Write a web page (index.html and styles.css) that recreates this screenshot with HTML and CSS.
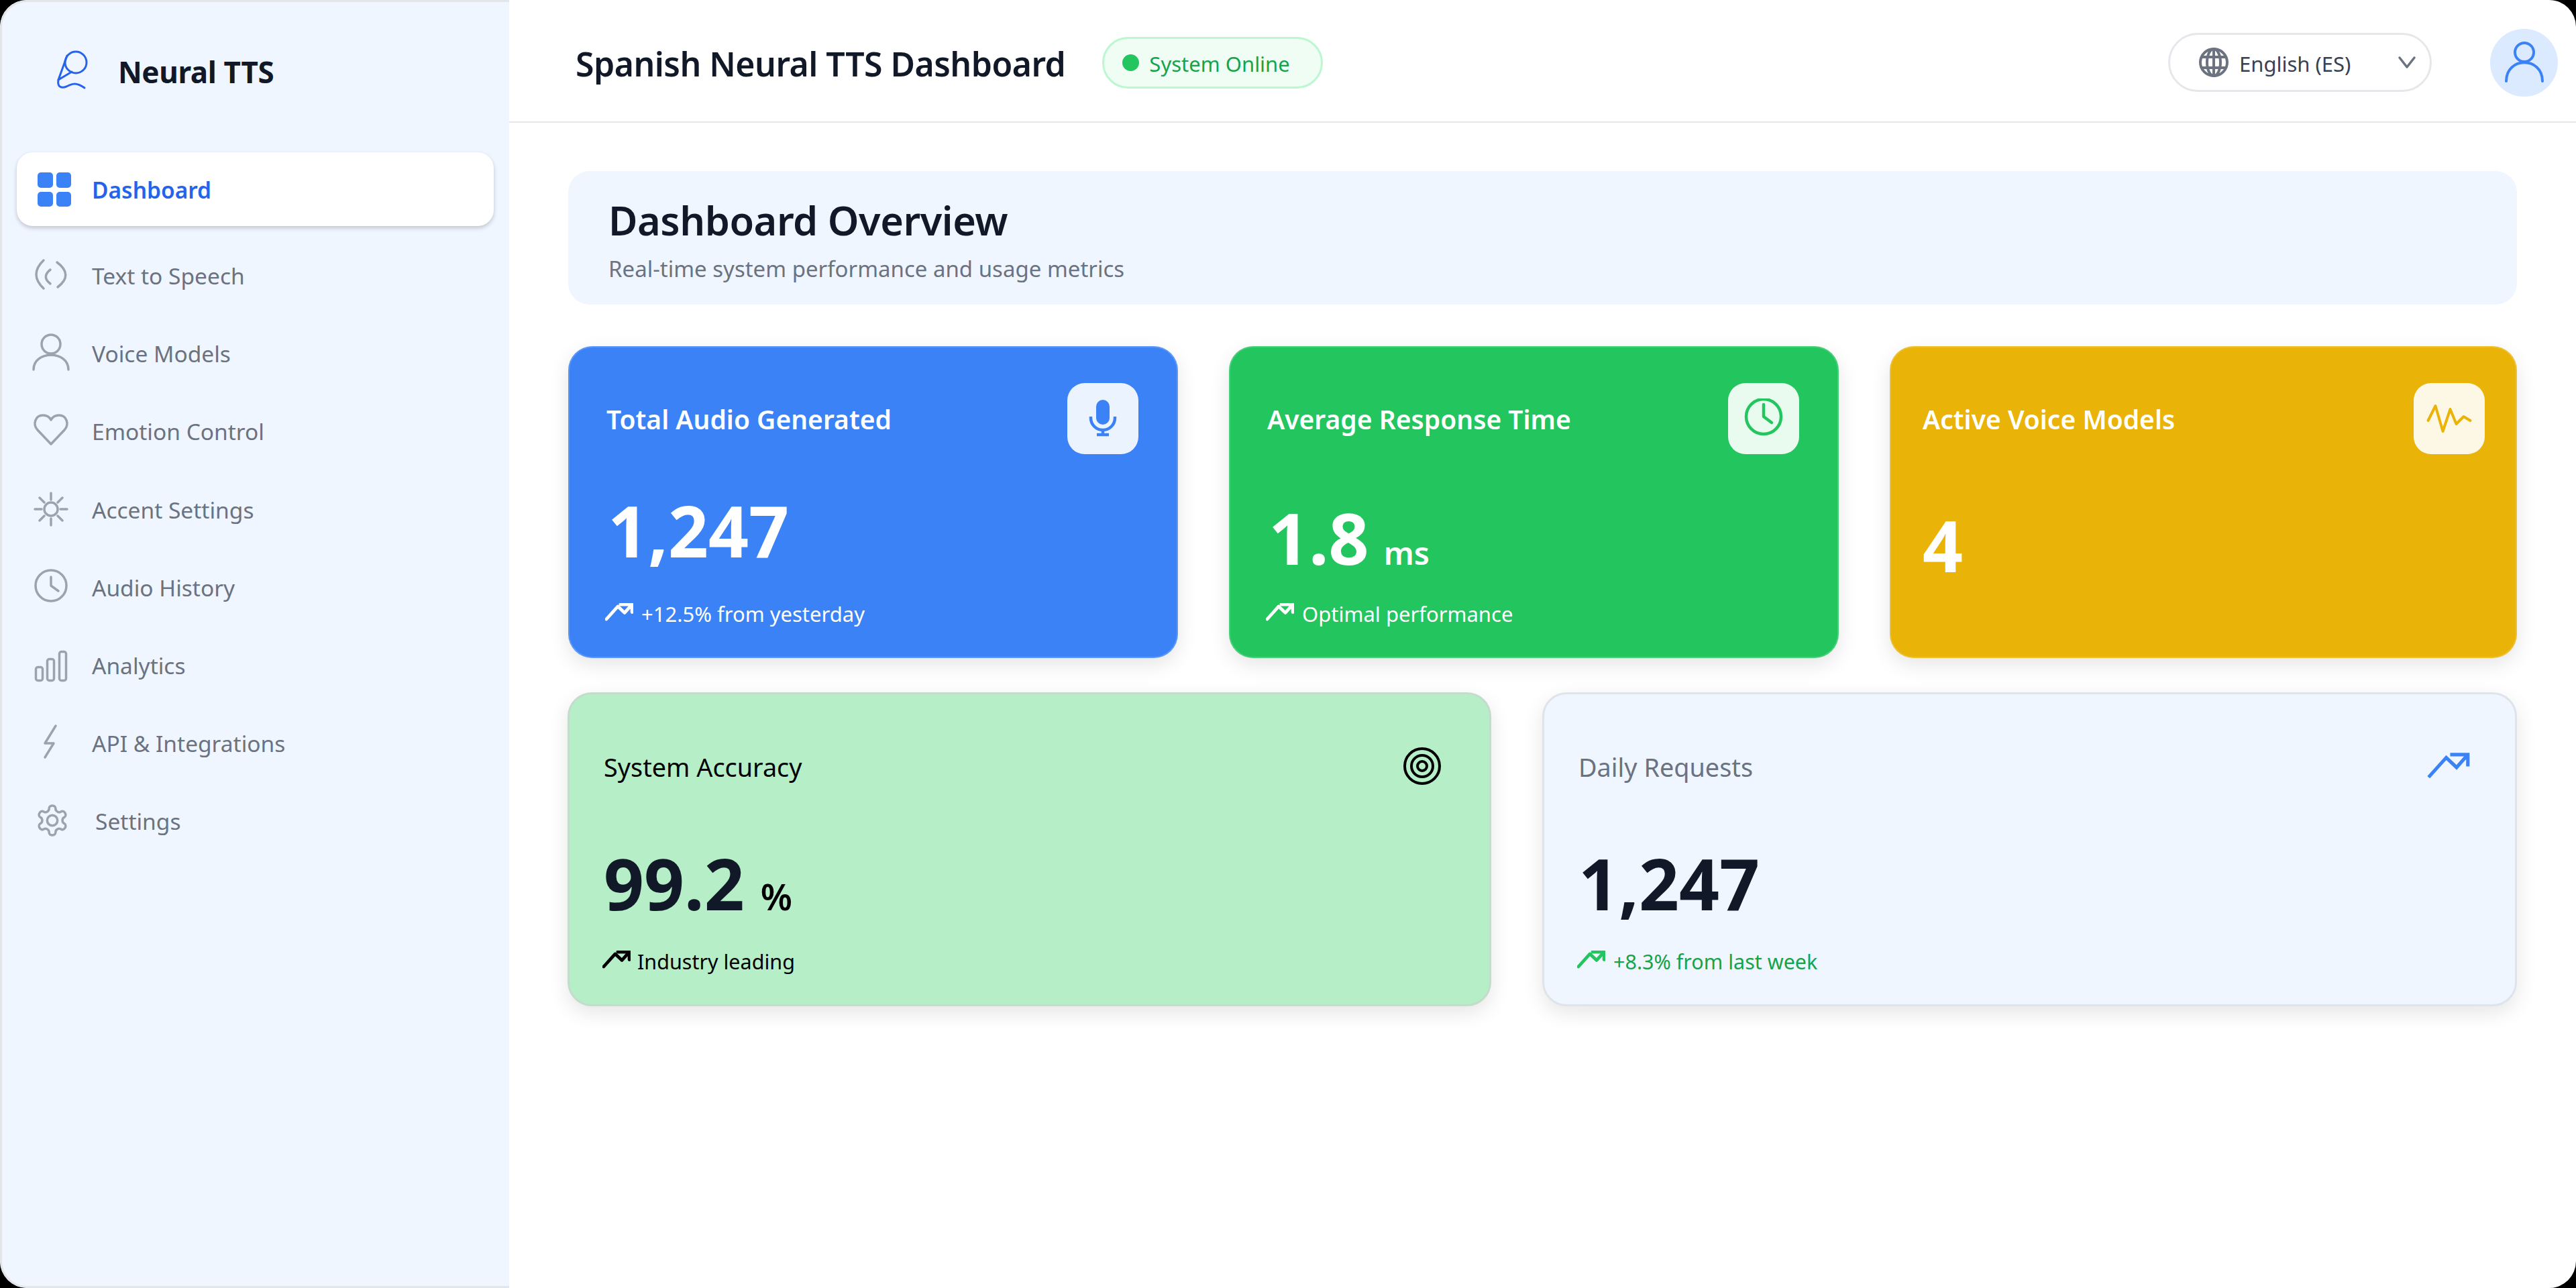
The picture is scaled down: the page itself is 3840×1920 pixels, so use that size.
FILE: index.html
```html
<!DOCTYPE html>
<html lang="en">
<head>
    <meta charset="UTF-8">
    <meta name="viewport" content="width=device-width, initial-scale=1.0">
    <title>Spanish Neural TTS Dashboard</title>
    <link rel="stylesheet" href="styles.css">
</head>
<body>
    <div class="app">
        <aside class="sidebar">
            <div class="logo">
                <svg class="logo-icon" viewBox="0 0 52 60" fill="none" stroke="#2563eb" stroke-width="3" stroke-linecap="round" stroke-linejoin="round">
                    <circle cx="33" cy="18" r="16"/>
                    <path d="M20 8 7 44 27 32"/>
                    <path d="M7 44C5 55 12 57 19 54C27 50 33 47 46 56"/>
                </svg>
                <span class="logo-text">Neural TTS</span>
            </div>
            <nav class="nav">
                <a class="nav-item active" href="#">
                    <svg class="nav-icon" viewBox="0 0 60 60" fill="#3b82f6">
                        <rect x="8" y="3" width="23" height="23" rx="5"/>
                        <rect x="36" y="3" width="22" height="23" rx="5"/>
                        <rect x="8" y="32" width="23" height="22" rx="5"/>
                        <rect x="36" y="32" width="22" height="22" rx="5"/>
                    </svg>
                    Dashboard
                </a>
                <a class="nav-item" href="#">
                    <svg class="nav-icon" viewBox="0 0 60 60">
                        <path d="M17 8Q-5 29 17 50"/>
                        <path d="M27 22Q13.6 32.5 27 43"/>
                        <path d="M37 11Q62 29.5 38 48"/>
                    </svg>
                    Text to Speech
                </a>
                <a class="nav-item" href="#">
                    <svg class="nav-icon" viewBox="0 0 60 60">
                        <circle cx="28" cy="17" r="14"/>
                        <path d="M2 55C2 26 54 26 54 55"/>
                    </svg>
                    Voice Models
                </a>
                <a class="nav-item" href="#">
                    <svg class="nav-icon" viewBox="0 0 60 60">
                        <path d="M28 50 8 29C0 20 5 7 16 7C22 7 26 10 28 14C30 10 34 7 40 7C51 7 56 20 48 29Z"/>
                    </svg>
                    Emotion Control
                </a>
                <a class="nav-item" href="#">
                    <svg class="nav-icon" viewBox="0 0 60 60">
                        <circle cx="28" cy="30" r="10"/>
                        <path d="M28 6V16M28 44V54M4 30H14M42 30H52M11 13 18 20M38 40 45 47M11 47 18 40M38 20 45 13"/>
                    </svg>
                    Accent Settings
                </a>
                <a class="nav-item" href="#">
                    <svg class="nav-icon" viewBox="0 0 60 60">
                        <circle cx="28" cy="28" r="23"/>
                        <path d="M28 15V28L39 36"/>
                    </svg>
                    Audio History
                </a>
                <a class="nav-item" href="#">
                    <svg class="nav-icon" viewBox="0 0 60 60">
                        <rect x="5.5" y="33.5" width="10" height="20" rx="3"/>
                        <rect x="22.5" y="21.5" width="10" height="32" rx="3"/>
                        <rect x="40.5" y="10.5" width="10" height="43" rx="3"/>
                    </svg>
                    Analytics
                </a>
                <a class="nav-item" href="#">
                    <svg class="nav-icon" viewBox="0 0 60 60">
                        <path d="M35 5 19 31H32L19 52"/>
                    </svg>
                    API &amp; Integrations
                </a>
                <a class="nav-item nav-settings" href="#">
                    <svg class="nav-icon" viewBox="0 0 60 60">
                        <g transform="translate(3.6 3.6) scale(2.2)" stroke-width="1.6">
                            <path d="M12.22 2h-.44a2 2 0 0 0-2 2v.18a2 2 0 0 1-1 1.73l-.43.25a2 2 0 0 1-2 0l-.15-.08a2 2 0 0 0-2.73.73l-.22.38a2 2 0 0 0 .73 2.73l.15.1a2 2 0 0 1 1 1.72v.51a2 2 0 0 1-1 1.74l-.15.09a2 2 0 0 0-.73 2.73l.22.38a2 2 0 0 0 2.73.73l.15-.08a2 2 0 0 1 2 0l.43.25a2 2 0 0 1 1 1.73V20a2 2 0 0 0 2 2h.44a2 2 0 0 0 2-2v-.18a2 2 0 0 1 1-1.73l.43-.25a2 2 0 0 1 2 0l.15.08a2 2 0 0 0 2.73-.73l.22-.39a2 2 0 0 0-.73-2.73l-.15-.08a2 2 0 0 1-1-1.74v-.5a2 2 0 0 1 1-1.74l.15-.09a2 2 0 0 0 .73-2.73l-.22-.38a2 2 0 0 0-2.73-.73l-.15.08a2 2 0 0 1-2 0l-.43-.25a2 2 0 0 1-1-1.73V4a2 2 0 0 0-2-2z"/>
                            <circle cx="12" cy="12" r="3.5"/>
                        </g>
                    </svg>
                    Settings
                </a>
            </nav>
        </aside>

        <div class="main">
            <header class="topbar">
                <h1 class="page-title">Spanish Neural TTS Dashboard</h1>
                <div class="status-pill"><span class="status-dot"></span>System Online</div>
                <div class="lang-select">
                    <svg class="globe" viewBox="0 0 44 44" fill="none" stroke="#6b7280" stroke-width="4">
                        <circle cx="22" cy="22" r="20"/>
                        <ellipse cx="22" cy="22" rx="10" ry="20"/>
                        <path d="M4 14H40M4 30H40M22 2V42"/>
                    </svg>
                    <span class="lang-label">English (ES)</span>
                    <svg class="chevron" viewBox="0 0 28 20" fill="none" stroke="#6b7280" stroke-width="3.5" stroke-linecap="round" stroke-linejoin="round">
                        <path d="M3 3 14 17 25 3"/>
                    </svg>
                </div>
                <div class="avatar">
                    <svg viewBox="0 0 60 62" fill="none" stroke="#3b82f6" stroke-width="4" stroke-linecap="round">
                        <circle cx="30" cy="16" r="14"/>
                        <path d="M3 59C3 22 57 22 57 59"/>
                    </svg>
                </div>
            </header>

            <main class="content">
                <section class="overview">
                    <h2>Dashboard Overview</h2>
                    <p>Real-time system performance and usage metrics</p>
                </section>

                <section class="stats-top">
                    <div class="card card-blue">
                        <div class="card-head">
                            <span class="card-title">Total Audio Generated</span>
                            <span class="card-tile">
                                <svg viewBox="0 0 60 60" fill="none" stroke="#3b82f6" stroke-width="4.5">
                                    <rect x="20" y="2" width="20" height="37" rx="10" fill="#3b82f6" stroke="none"/>
                                    <path d="M12 27V29A18 18 0 0 0 48 29V27M30 47V54M21 54H39"/>
                                </svg>
                            </span>
                        </div>
                        <div class="card-value">1,247</div>
                        <div class="card-sub">
                            <svg class="trend" viewBox="0 0 44 28"><path d="M2 25 20 5 30.5 15 42 2M24 2H42V14"/></svg>
                            +12.5% from yesterday
                        </div>
                    </div>
                    <div class="card card-green">
                        <div class="card-head">
                            <span class="card-title">Average Response Time</span>
                            <span class="card-tile">
                                <svg viewBox="0 0 60 60" fill="none" stroke="#22c55e" stroke-width="4.5" stroke-linecap="round" stroke-linejoin="round">
                                    <circle cx="30" cy="27" r="26"/>
                                    <path d="M30 9V27L42 36"/>
                                </svg>
                            </span>
                        </div>
                        <div class="card-value">1.8<span class="unit">ms</span></div>
                        <div class="card-sub">
                            <svg class="trend" viewBox="0 0 44 28"><path d="M2 25 20 5 30.5 15 42 2M24 2H42V14"/></svg>
                            Optimal performance
                        </div>
                    </div>
                    <div class="card card-yellow">
                        <div class="card-head">
                            <span class="card-title">Active Voice Models</span>
                            <span class="card-tile">
                                <svg viewBox="0 0 70 70" fill="none" stroke="#eab308" stroke-width="4" stroke-linecap="round" stroke-linejoin="round">
                                    <path d="M3.5 38 14.5 16 25.500 54 36.500 21 45.500 43 56.500 32 66.500 38"/>
                                </svg>
                            </span>
                        </div>
                        <div class="card-value">4</div>
                    </div>
                </section>

                <section class="stats-bottom">
                    <div class="card-light card-mint">
                        <div class="card-head-light">
                            <span class="card-title-light">System Accuracy</span>
                            <svg class="target" viewBox="0 0 56 56" fill="none" stroke="#000" stroke-width="4">
                                <circle cx="28" cy="28" r="26"/>
                                <circle cx="28" cy="28" r="16"/>
                                <circle cx="28" cy="28" r="7"/>
                            </svg>
                        </div>
                        <div class="card-value">99.2<span class="unit">%</span></div>
                        <div class="card-sub">
                            <svg class="trend" viewBox="0 0 44 28"><path d="M2 25 20 5 30.5 15 42 2M24 2H42V14"/></svg>
                            Industry leading
                        </div>
                    </div>
                    <div class="card-light card-pale">
                        <div class="card-head-light">
                            <span class="card-title-light">Daily Requests</span>
                            <svg class="trend-big" viewBox="0 0 44 28"><path d="M2 25 20 5 30.5 15 42 2M24 2H42V14"/></svg>
                        </div>
                        <div class="card-value">1,247</div>
                        <div class="card-sub">
                            <svg class="trend" viewBox="0 0 44 28"><path d="M2 25 20 5 30.5 15 42 2M24 2H42V14"/></svg>
                            +8.3% from last week
                        </div>
                    </div>
                </section>
            </main>
        </div>
    </div>
</body>
</html>
```

FILE: styles.css
```css
* {
    box-sizing: border-box;
}

html, body {
    margin: 0;
    padding: 0;
    height: 100%;
    background: #000;
}

body {
    font-family: "Noto Sans", sans-serif;
    color: #111827;
}

.app {
    display: flex;
    width: 3840px;
    height: 1920px;
    background: #fff;
    border-radius: 40px;
    overflow: hidden;
}

/* sidebar */
.sidebar {
    flex: 0 0 759px;
    background: #eff6ff;
    border-left: 3px solid #e2e5ea;
    border-top: 3px solid #e2e5ea;
    border-bottom: 3px solid #e2e5ea;
    border-radius: 40px 0 0 40px;
}

.logo {
    display: flex;
    align-items: center;
    height: 224px;
    padding: 0 0 20px 77px;
}

.logo-icon {
    width: 52px;
    height: 60px;
}

.logo-text {
    margin: 3px 0 0 44px;
    font-size: 44px;
    font-weight: 700;
    letter-spacing: -0.4px;
}

.nav {
    display: flex;
    flex-direction: column;
    padding: 0 23px 0 22px;
}

.nav-item {
    display: flex;
    align-items: center;
    gap: 29px;
    height: 116.2px;
    padding: 2px 0 0 23px;
    font-size: 33.5px;
    color: #6b7280;
    text-decoration: none;
}

.nav-item.active {
    height: 110px;
    margin-bottom: 15px;
    background: #fff;
    border-radius: 24px;
    box-shadow: 0 3px 6px rgba(0, 0, 0, 0.2);
    color: #2563eb;
    font-weight: 600;
}

.nav-settings {
    gap: 34px;
}

.nav-icon {
    flex: none;
    width: 60px;
    height: 60px;
    margin-top: -2px;
    fill: none;
    stroke: #9ca3af;
    stroke-width: 3.5;
    stroke-linecap: round;
    stroke-linejoin: round;
    overflow: visible;
}

.active .nav-icon {
    margin-top: 2px;
    fill: #3b82f6;
    stroke: none;
}

/* top bar */
.main {
    flex: 1;
    min-width: 0;
}

.topbar {
    display: flex;
    align-items: center;
    height: 183px;
    padding: 5px 27px 0 99px;
    border-bottom: 2px solid #e5e7eb;
}

.page-title {
    margin: 4px 0 0;
    font-size: 50px;
    font-weight: 600;
    letter-spacing: -0.55px;
}

.status-pill {
    display: flex;
    align-items: center;
    width: 329px;
    height: 77px;
    margin-left: 55px;
    padding: 4px 0 0 27px;
    background: #f0fdf4;
    border: 3px solid #bbf7d0;
    border-radius: 39px;
    color: #16a34a;
    font-size: 31px;
}

.status-dot {
    width: 25px;
    height: 25px;
    margin: -4px 15px 0 0;
    border-radius: 50%;
    background: #22c55e;
}

.lang-select {
    display: flex;
    align-items: center;
    width: 393px;
    height: 88px;
    margin-left: auto;
    padding: 0 20px 0 43px;
    border: 3px solid #e5e7eb;
    border-radius: 44px;
}

.globe {
    width: 44px;
    height: 44px;
}

.lang-label {
    margin: 4px 0 0 16px;
    font-size: 31px;
    color: #374151;
}

.chevron {
    width: 28px;
    height: 20px;
    margin-left: auto;
}

.avatar {
    display: flex;
    align-items: center;
    justify-content: center;
    width: 101px;
    height: 101px;
    margin-left: 87px;
    border-radius: 50%;
    background: #dbeafe;
}

.avatar svg {
    width: 60px;
    height: 62px;
}

/* content */
.content {
    padding: 72px 88px 0;
}

.overview {
    height: 199px;
    padding: 37px 60px 0;
    background: #eff6ff;
    border-radius: 32px;
}

.overview h2 {
    margin: 0;
    font-size: 59.5px;
    font-weight: 600;
    line-height: 72px;
    letter-spacing: -0.5px;
}

.overview p {
    margin: 14px 0 0;
    font-size: 33px;
    line-height: 46px;
    color: #6b7280;
}

.stats-top {
    display: grid;
    grid-template-columns: 909px 909px 1fr;
    grid-template-rows: 465px;
    gap: 76px;
    margin-top: 62px;
}

.stats-bottom {
    display: grid;
    grid-template-columns: 1377px 1fr;
    grid-template-rows: 468px;
    gap: 76px;
    margin-top: 51px;
    margin-left: -1px;
}

.card {
    padding: 55px 59px 0 57px;
    border-radius: 36px;
    color: #fff;
    box-shadow: inset 0 0 0 2px rgba(255, 255, 255, 0.18), 0 10px 30px rgba(0, 0, 0, 0.1);
}

.card-blue {
    background: #3b82f6;
}

.card-green {
    background: #22c55e;
}

.card-yellow {
    padding: 55px 48px 0 49px;
    background: #eab308;
}

.card-head {
    display: flex;
    align-items: center;
    justify-content: space-between;
    height: 106px;
}

.card-title {
    font-size: 39px;
    font-weight: 600;
}

.card-tile {
    display: flex;
    align-items: center;
    justify-content: center;
    width: 106px;
    height: 106px;
    border-radius: 26px;
    background: rgba(255, 255, 255, 0.9);
}

.card-tile svg {
    width: 60px;
    height: 60px;
}

.card-yellow .card-tile svg {
    width: 70px;
    height: 70px;
}

.card-value {
    font-size: 105px;
    font-weight: 700;
    line-height: 1;
}

.card-blue .card-value,
.card-green .card-value {
    margin-left: 2px;
}

.unit {
    margin-left: 22px;
    font-size: 47px;
    font-weight: 600;
}

.card-mint .unit {
    margin-left: 24px;
    font-size: 54px;
    color: #000;
}

.card-sub {
    display: flex;
    align-items: center;
    gap: 12px;
    height: 45px;
    font-size: 31px;
}

.trend {
    flex: none;
    width: 42px;
    height: 27px;
    margin: -4px 0 0 -2px;
    fill: none;
    stroke: currentColor;
    stroke-width: 5;
    stroke-linecap: round;
    stroke-linejoin: round;
}

.card-blue .card-value {
    margin-top: 61px;
}

.card-blue .card-sub {
    margin-top: 49px;
}

.card-green .card-value {
    margin-top: 72px;
}

.card-green .card-sub {
    margin-top: 38px;
}

.card-yellow .card-value {
    margin-top: 83px;
}

/* lower cards */
.card-light {
    padding: 73px 66px 0 51px;
    border: 3px solid #dfe3ea;
    border-radius: 36px;
    box-shadow: 0 10px 30px rgba(0, 0, 0, 0.1);
}

.card-mint {
    padding-right: 72px;
    background: #b5eec7;
    border-color: #c4dccc;
    color: #000;
}

.card-pale {
    background: #eff6ff;
}

.card-head-light {
    display: flex;
    align-items: center;
    justify-content: space-between;
    height: 70px;
}

.card-title-light {
    font-size: 37.8px;
}

.card-pale .card-title-light {
    color: #6b7280;
}

.target {
    width: 56px;
    height: 56px;
    margin-top: -2px;
}

.trend-big {
    width: 67px;
    height: 41px;
    margin-top: -2px;
    fill: none;
    stroke: #3b82f6;
    stroke-width: 3.5;
}

.card-light .card-value {
    margin-top: 86px;
    color: #111827;
}

.card-light .card-sub {
    margin-top: 41px;
    font-size: 30.5px;
}

.card-mint .card-sub {
    gap: 10px;
}

.card-pale .card-sub {
    color: #16a34a;
}

.card-pale .trend {
    color: #22c55e;
}
```
